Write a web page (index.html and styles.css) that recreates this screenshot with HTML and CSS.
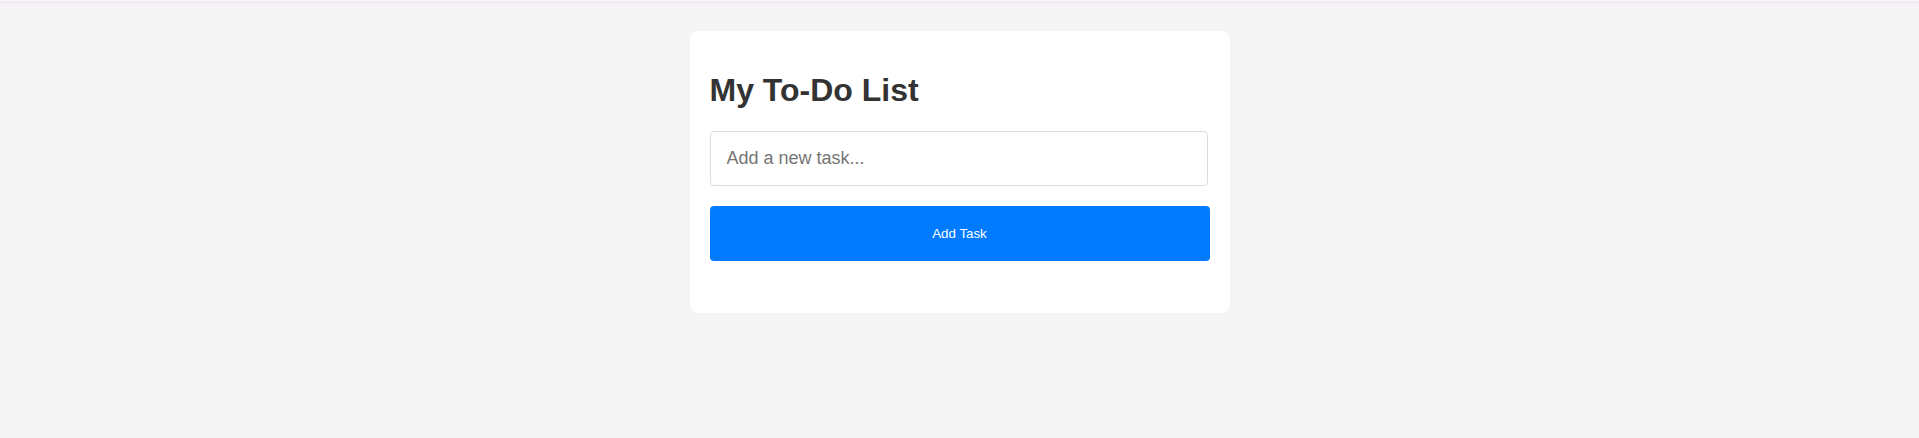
FILE: index.html
```html
<!DOCTYPE html>
<html lang="en">
<head>
<meta charset="utf-8">
<title>My To-Do List</title>
<link rel="stylesheet" href="styles.css">
</head>
<body>
<div class="topline"></div>
<main class="card">
  <h1 class="title">My To-Do List</h1>
  <input class="task-input" type="text" placeholder="Add a new task...">
  <button class="add-btn" type="button">Add Task</button>
  <ul class="task-list"></ul>
</main>
</body>
</html>
```

FILE: styles.css
```css
html, body {
  margin: 0;
  padding: 0;
}
body {
  background: #f4f4f4;
  font-family: "Liberation Sans", Arial, sans-serif;
  min-height: 438px;
}
.topline {
  height: 1px;
  margin-top: 2px;
  background: #f2def4;
}
.card {
  display: block;
  width: 500px;
  margin: 28px auto 0;
  padding: 20px;
  background: #ffffff;
  border-radius: 8px;
}
.title {
  margin: 21.44px 0;
  font-size: 32px;
  font-weight: bold;
  color: #333333;
  line-height: normal;
}
.task-input {
  display: block;
  box-sizing: border-box;
  width: 498px;
  margin: 0 0 20px;
  padding: 16px 15px 16px 16px;
  border: 1px solid #dddddd;
  border-radius: 4px;
  font-family: "Liberation Sans", Arial, sans-serif;
  font-size: 18px;
  color: #333;
  outline: none;
}
.task-input::placeholder {
  color: #757575;
}
.add-btn {
  display: block;
  box-sizing: border-box;
  width: 500px;
  padding: 20px;
  border: none;
  border-radius: 4px;
  background: #007bff;
  color: #ffffff;
  font-family: "Liberation Sans", Arial, sans-serif;
  font-size: 13.333px;
  font-weight: 500;
  line-height: 15px;
  cursor: pointer;
}
.task-list {
  list-style: none;
  margin: 32px 0 0;
  padding: 0;
}
```
